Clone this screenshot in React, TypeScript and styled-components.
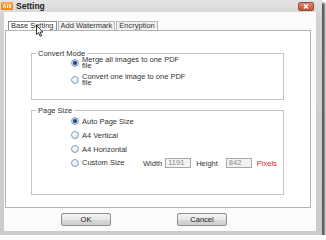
import React from 'react';
import styled, { createGlobalStyle } from 'styled-components';

const GlobalStyle = createGlobalStyle`
  html, body {
    margin: 0;
    padding: 0;
    background: #ffffff;
  }
  body {
    font-family: 'Liberation Sans', Arial, sans-serif;
  }
`;

const Window = styled.div`
  width: 322px;
  height: 235px;
  box-sizing: border-box;
  display: flex;
  flex-direction: column;
  padding: 0 6px 4px 4px;
  background: linear-gradient(#e4e4e4 0%, #d2d2d2 8%, #cbcbcb 100%);
  box-shadow: 3px 3px 2px rgba(0, 0, 0, 0.65);
`;

const TitleBar = styled.div`
  height: 12px;
  display: flex;
  align-items: center;
  gap: 3px;
  margin-left: -3px;
`;

const Title = styled.span`
  font-size: 8.5px;
  font-weight: 700;
  color: #1e1e1e;
  flex: 1;
`;

const CloseButton = styled.div`
  width: 14px;
  height: 7px;
  margin-right: 2px;
  border-radius: 2px;
  background: linear-gradient(#e08a78, #c4503c);
  border: 1px solid #9c4a3c;
  display: flex;
  align-items: center;
  justify-content: center;
`;

const Client = styled.div`
  flex: 1;
  display: flex;
  flex-direction: column;
  background: #fbfbfb;
  padding-top: 9px;
`;

const TabStrip = styled.div`
  position: relative;
  height: 9px;
  display: flex;
  margin-left: 4px;
  z-index: 1;
`;

const Tab = styled.div<{ $active?: boolean }>`
  height: 9px;
  box-sizing: border-box;
  padding: 0 2px;
  margin-right: 1px;
  font-size: 7.5px;
  line-height: 8px;
  color: #333;
  border: 1px solid ${p => (p.$active ? '#8c8c8c' : '#b8b8b8')};
  border-bottom: none;
  background: ${p => (p.$active ? '#ffffff' : '#f1f1f1')};
  white-space: nowrap;
`;

const Cursor = styled.svg`
  position: absolute;
  left: 28px;
  top: 4px;
`;

const Panel = styled.div`
  height: 178px;
  box-sizing: border-box;
  margin: 0 5px 0 1px;
  border: 1px solid #b4b4b4;
  background: #ffffff;
  padding: 19px 0 0 25px;
  display: flex;
  flex-direction: column;
  gap: 7px;
`;

const Group = styled.fieldset<{ $height: number }>`
  margin: 0;
  padding: 0;
  width: 253px;
  height: ${p => p.$height}px;
  box-sizing: border-box;
  border: 1px solid #c4c4c4;
  display: flex;
  flex-direction: column;
  min-width: 0;
`;

const Legend = styled.legend`
  margin-left: 4px;
  padding: 0 2px;
  font-size: 7.5px;
  line-height: 7px;
  color: #333;
`;

const Rows = styled.div<{ $gap: number }>`
  display: flex;
  flex-direction: column;
  gap: ${p => p.$gap}px;
  padding-left: 39px;
`;

const Row = styled.div<{ $h: number }>`
  height: ${p => p.$h}px;
  display: flex;
  align-items: center;
`;

const Radio = styled.span<{ $checked?: boolean }>`
  width: 6px;
  height: 6px;
  flex: none;
  border-radius: 50%;
  border: 1px solid #8aa4bc;
  background: ${p =>
    p.$checked
      ? 'radial-gradient(circle, #1d3f78 0, #2f5a96 1.8px, #bcd4ea 2.4px, #e6f0f8 100%)'
      : 'radial-gradient(circle at 40% 35%, #ffffff 0, #dce9f4 60%, #bcd0e2 100%)'};
  margin-right: 3px;
`;

const RadioText = styled.span<{ $width?: number }>`
  font-size: 7.5px;
  line-height: ${p => (p.$width ? '6.5px' : '9px')};
  color: #333;
  width: ${p => (p.$width ? `${p.$width}px` : 'auto')};
  flex: none;
  white-space: ${p => (p.$width ? 'normal' : 'nowrap')};
`;

const FieldLabel = styled.span`
  font-size: 7.5px;
  color: #333;
  margin-right: 3px;
`;

const NumberBox = styled.div<{ $gapLeft?: number }>`
  width: 26px;
  height: 10px;
  box-sizing: border-box;
  border: 1px solid #a8a8a8;
  background: #f2f2f2;
  font-size: 7.5px;
  line-height: 8px;
  color: #8a8a8a;
  padding-left: 2px;
  margin-left: ${p => p.$gapLeft ?? 0}px;
  margin-right: 5px;
`;

const Unit = styled.span`
  font-size: 7.5px;
  color: #e02828;
`;

const ButtonRow = styled.div`
  display: flex;
  gap: 66px;
  padding: 5px 0 0 57px;
`;

const Button = styled.div`
  width: 50px;
  height: 13px;
  box-sizing: border-box;
  border: 1px solid #8e8e8e;
  border-radius: 2px;
  background: linear-gradient(#f6f6f6 0%, #e6e6e6 50%, #d8d8d8 51%, #cfcfcf 100%);
  font-size: 7.5px;
  line-height: 11px;
  text-align: center;
  color: #222;
`;

const AppIcon = () => (
  <svg width="12" height="8" viewBox="0 0 12 8">
    <rect x="0" y="0" width="12" height="8" rx="1" fill="#ef8a1c" />
    <rect x="0" y="0" width="12" height="3" rx="1" fill="#f6a848" />
    <path d="M2 6 L3.5 2.5 L5 6 M6.5 2.5 L6.5 6 M8 2.5 L10 6 M10 2.5 L8 6" stroke="#ffffff" strokeWidth="1" fill="none" />
  </svg>
);

export default function App() {
  return (
    <>
      <GlobalStyle />
      <Window>
        <TitleBar>
          <AppIcon />
          <Title>Setting</Title>
          <CloseButton>
            <svg width="6" height="5" viewBox="0 0 6 5">
              <path d="M1 0.5 L5 4.5 M5 0.5 L1 4.5" stroke="#ffffff" strokeWidth="1.4" />
            </svg>
          </CloseButton>
        </TitleBar>
        <Client>
          <TabStrip>
            <Tab $active>Base Setting</Tab>
            <Tab>Add Watermark</Tab>
            <Tab>Encryption</Tab>
            <Cursor width="8" height="12" viewBox="0 0 8 12">
              <path d="M0.5 0.5 L0.5 9.5 L2.6 7.6 L4.2 11.2 L5.6 10.6 L4.1 7.1 L7 7.1 Z" fill="#ffffff" stroke="#000000" strokeWidth="0.8" />
            </Cursor>
          </TabStrip>
          <Panel>
            <Group $height={50}>
              <Legend>Convert Mode</Legend>
              <Rows $gap={5}>
                <Row $h={12}>
                  <Radio $checked />
                  <RadioText $width={104}>Merge all images to one PDF file</RadioText>
                </Row>
                <Row $h={12}>
                  <Radio />
                  <RadioText $width={104}>Convert one image to one PDF file</RadioText>
                </Row>
              </Rows>
            </Group>
            <Group $height={88}>
              <Legend>Page Size</Legend>
              <Rows $gap={0}>
                <Row $h={14}>
                  <Radio $checked />
                  <RadioText>Auto Page Size</RadioText>
                </Row>
                <Row $h={14}>
                  <Radio />
                  <RadioText>A4 Vertical</RadioText>
                </Row>
                <Row $h={14}>
                  <Radio />
                  <RadioText>A4 Horizontal</RadioText>
                </Row>
                <Row $h={14}>
                  <Radio />
                  <RadioText $width={61}>Custom Size</RadioText>
                  <FieldLabel>Width</FieldLabel>
                  <NumberBox>1191</NumberBox>
                  <FieldLabel>Height</FieldLabel>
                  <NumberBox $gapLeft={5}>842</NumberBox>
                  <Unit>Pixels</Unit>
                </Row>
              </Rows>
            </Group>
          </Panel>
          <ButtonRow>
            <Button>OK</Button>
            <Button>Cancel</Button>
          </ButtonRow>
        </Client>
      </Window>
    </>
  );
}
